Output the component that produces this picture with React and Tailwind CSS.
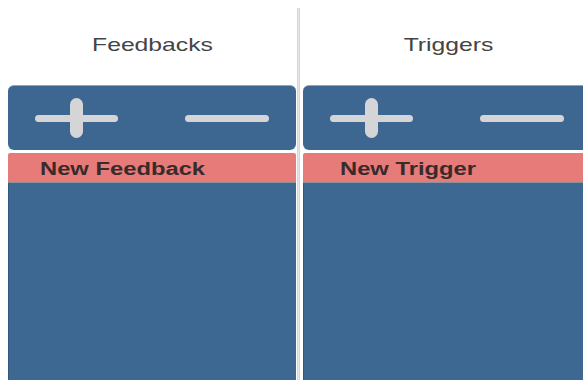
import React from 'react'

const Bar = ({ className }) => <div className={`rounded-full bg-[#d5d5d8] ${className}`} />

const Panel = ({ title, item, itemPad, width }) => (
  <div className={`${width} shrink-0 flex flex-col`}>
    {/* titulo */}
    <div className="h-[85px] pt-[35px] text-center text-[19px] leading-[20px] text-[#444444]">
      <span className="inline-block scale-x-[1.3] origin-center">{title}</span>
    </div>

    {/* barra de acciones */}
    <div className="h-[65px] rounded-[6px] bg-[#3d6791] border-t border-[#8fa4ba] flex items-center pl-[27px]">
      <div className="relative w-[83px] h-[40px] flex items-center">
        <Bar className="w-[83px] h-[7px]" />
        <Bar className="absolute left-[35px] top-0 w-[13px] h-[40px] rounded-[4px]" />
      </div>
      <Bar className="ml-[67px] w-[84px] h-[7px]" />
    </div>

    {/* item seleccionado */}
    <div
      className={`mt-[3px] h-[30px] rounded-t-[2px] bg-[#e67b7a] border-b border-[#8d8f96] text-[18px] leading-[30px] pt-[1px] font-bold text-[#3a2b2b] ${itemPad}`}
    >
      <span className="inline-block scale-x-[1.32] origin-left">{item}</span>
    </div>

    {/* lista */}
    <div className="flex-1 bg-[#3d6892] border-l border-[#30577e]" />
  </div>
)

const App = () => {
  return (
    <div className="w-[583px] h-[380px] overflow-hidden bg-white flex font-['Liberation_Sans',Arial,sans-serif]">
      <div className="ml-[8px] flex">
        <Panel title="Feedbacks" item="New Feedback" itemPad="pl-[32px]" width="w-[288px]" />
      </div>
      <div className="ml-[1px] mt-[8px] w-[3px] shrink-0 bg-gradient-to-r from-[#cfcfcf] via-[#e6e6e6] to-[#cfcfcf]" />
      <div className="ml-[3px] flex">
        <Panel title="Triggers" item="New Trigger" itemPad="pl-[37px]" width="w-[290px]" />
      </div>
    </div>
  )
}

export default App
